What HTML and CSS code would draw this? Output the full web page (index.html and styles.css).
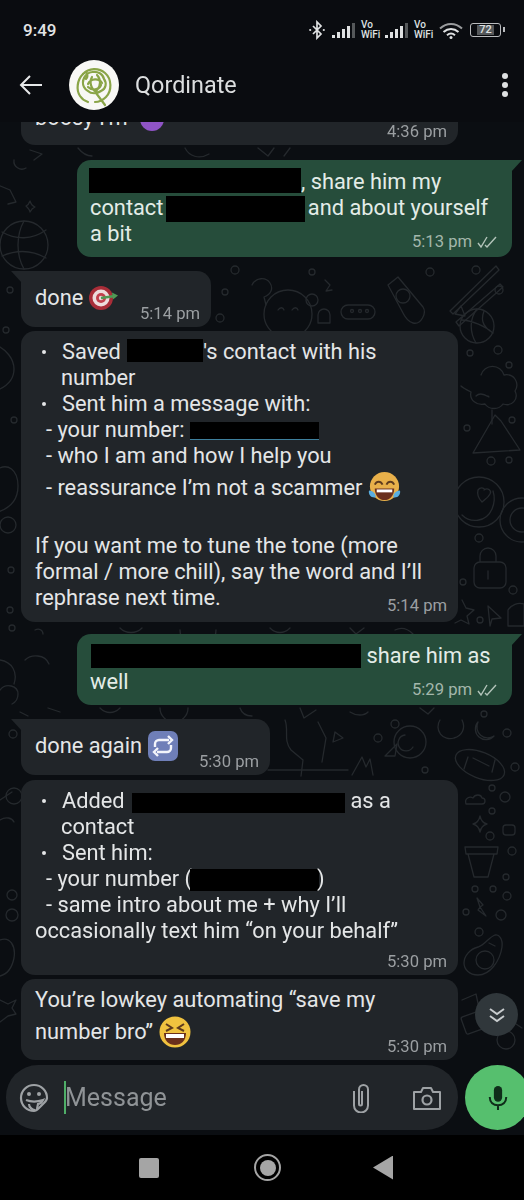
FILE: index.html
```html
<!DOCTYPE html>
<html lang="en">
<head>
<meta charset="utf-8">
<title>Qordinate</title>
<link rel="stylesheet" href="styles.css">
</head>
<body>
<div class="phone">
  <header class="top">
    <div class="status">
      <span class="clock">9:49</span>
      <div class="status-icons">
        <svg class="ic-bt" viewBox="0 0 18 18"><path d="M5 5l8 8-4 4V1l4 4-8 8" fill="none" stroke="#dfe1e2" stroke-width="1.700"/><circle cx="2.200" cy="9" r="1.100" fill="#dfe1e2"/><circle cx="15.800" cy="9" r="1.100" fill="#dfe1e2"/></svg>
        <svg class="ic-sig" viewBox="0 0 24 15"><rect x="0" y="12" width="3" height="3" fill="#dfe1e2"/><rect x="5" y="9" width="3" height="6" fill="#dfe1e2"/><rect x="10" y="6" width="3" height="9" fill="#dfe1e2"/><rect x="15" y="3" width="3" height="12" fill="#dfe1e2"/><rect x="20" y="0" width="3" height="15" fill="#55585a"/></svg>
        <span class="vowifi">Vo<br>WiFi</span>
        <svg class="ic-sig" viewBox="0 0 24 15"><rect x="0" y="12" width="3" height="3" fill="#dfe1e2"/><rect x="5" y="9" width="3" height="6" fill="#dfe1e2"/><rect x="10" y="6" width="3" height="9" fill="#dfe1e2"/><rect x="15" y="3" width="3" height="12" fill="#dfe1e2"/><rect x="20" y="0" width="3" height="15" fill="#55585a"/></svg>
        <span class="vowifi">Vo<br>WiFi</span>
        <svg class="ic-wifi" viewBox="0 0 24 17"><path d="M1 6.500C7.500 .5 16.500 .5 23 6.500" fill="none" stroke="#9a9c9e" stroke-width="2"/><path d="M4.500 10C9 6 15 6 19.500 10" fill="none" stroke="#dfe1e2" stroke-width="2"/><path d="M8 13.200C10.500 11 13.500 11 16 13.200" fill="none" stroke="#dfe1e2" stroke-width="2"/><circle cx="12" cy="15.500" r="1.500" fill="#dfe1e2"/></svg>
        <span class="battery"><span class="battery-level">72</span></span>
      </div>
    </div>
    <div class="appbar">
      <svg class="ic-back" viewBox="0 0 24 24"><path d="M23 12H2M11 3l-9 9 9 9" fill="none" stroke="#e6e8e9" stroke-width="2"/></svg>
      <span class="avatar">
        <svg viewBox="0 0 50 50"><g fill="none" stroke="#8aa548" stroke-width="2.200" stroke-linecap="round"><path d="M14 14a16 16 0 0 1 22-1c7 6 7 18 1 24-3 3-7 5-11 5"/><path d="M14 14c-6 6-7 16-3 22 2 3 5 5 8 6"/><path d="M17 12c2 3 2 5 0 7M15 27c-3-6 1-14 8-15 6-1 11 2 12 7 3 4 2 10-3 12-4 3-10 3-13 0-2-1-3-2-4-4z"/><path d="M19 24c3-6 11-6 14-1M19 27c4 4 11 3 13-2M23 17c-3 5-1 13 5 15M28 15c4 4 4 11 0 15"/><path d="M27 33l9 12"/></g></svg>
      </span>
      <span class="title">Qordinate</span>
      <span class="menu"><i></i><i></i><i></i></span>
    </div>
  </header>

  <main class="chat">
    <svg class="wallpaper" viewBox="0 122 524 1013" aria-hidden="true">
      <g fill="none" stroke="#25292d" stroke-width="1.300" stroke-linecap="round" stroke-linejoin="round">
        <path d="M450 311l46-45 3 4-46 44zM456 322l44-38 3 3-44 39z"/>
        <circle cx="477" cy="326" r="17"/><path d="M461 320c10 0 24 6 32 13M477 309c-7 9-8 22-1 34M484 311c-3 8-2 14 6 20"/>
        <path d="M481 375a12 12 0 0 1 23 0c10-2 16 8 11 16 4 8-3 16-12 13-4 6-14 6-18 0-8 2-16-4-14-12-4-2-8-4-10-6"/><path d="M476 396c6-6 16 4 12 0M492 410v14"/>
        <path d="M473 453l22-38 6 6 19 29z"/>
        <circle cx="479" cy="502" r="25"/><path d="M462 515c8 8 24 8 30-6 3-7 3-12 1-18M478 490c3-4 8-1 6 0 4-3 8 1 6 4-2 4-6 6-8 8-3-3-5-8-4-12z"/>
        <circle cx="522" cy="520" r="22"/><circle cx="522" cy="520" r="12"/>
        <path d="M474 568a6 6 0 0 1 6-6h20a6 6 0 0 1 6 6v14a6 6 0 0 1-6 6h-20a6 6 0 0 1-6-6zM480 562v-6a8 8 0 0 1 16 0v6M488 571v8"/>
        <path d="M462 600l4 8 8 2-7 6 2 8-8-4-6 3M488 606l13 12-9 1-2 7z"/>
        <path d="M508 610a14 14 0 0 1 16-6v22h-16z"/>
        <circle cx="476" cy="270" r="4"/><circle cx="499" cy="290" r="4"/><circle cx="498" cy="350" r="4"/><circle cx="470" cy="353" r="3"/><circle cx="509" cy="365" r="3"/><circle cx="467" cy="428" r="3"/><circle cx="512" cy="420" r="3"/><circle cx="491" cy="461" r="4"/><circle cx="509" cy="460" r="3"/><circle cx="479" cy="538" r="4"/><circle cx="513" cy="590" r="4"/><circle cx="463" cy="582" r="3"/><circle cx="480" cy="620" r="3"/>
        <ellipse cx="480" cy="765" rx="26" ry="13" transform="rotate(22 480 765)"/><path d="M468 757l-4 12M492 772l3-12M473 758l16 8"/>
        <path d="M478 722a11 11 0 0 0 16 14 10 10 0 0 1-16-14z"/>
        <path d="M466 804c-2-6 4-8 7-6 2-4 8-4 9 0 4 0 4 6 0 6z"/>
        <path d="M480 816c1 5 3 7 7 8-4 1-6 3-7 8-1-5-3-7-7-8 4-1 6-3 7-8z"/>
        <rect x="503" y="825" width="12" height="10" rx="3"/>
        <path d="M465 847h33l-1 7h-31zM468 854l6 23h14l6-23"/>
        <path d="M477 898l6 7-3 2 6 9-8-6 2-3z"/>
        <path d="M478 947c7-2 11-10 17-12 4-1 8 4 7 12-2 14-12 28-24 28-9 0-14-6-14-12 0-7 6-14 14-16z"/><circle cx="485" cy="960" r="9"/><path d="M489 943l6 3"/>
        <rect x="463" y="1013" width="24" height="18" rx="2" transform="rotate(-20 475 1022)"/>
        <path d="M462 1000l14-6 3 14"/>
        <circle cx="506" cy="1040" r="9"/><path d="M510 1020l12 8"/>
        <circle cx="484" cy="714" r="3"/><circle cx="507" cy="733" r="4"/><circle cx="515" cy="767" r="4"/><circle cx="505" cy="797" r="5"/><circle cx="492" cy="788" r="3"/><circle cx="492" cy="811" r="3"/><circle cx="490" cy="836" r="4"/><circle cx="512" cy="851" r="4"/><circle cx="506" cy="877" r="3"/><circle cx="475" cy="889" r="3"/><circle cx="493" cy="889" r="3"/><circle cx="507" cy="896" r="4"/><circle cx="466" cy="912" r="3"/><circle cx="501" cy="915" r="5"/><circle cx="479" cy="932" r="4"/>
        <circle cx="24" cy="245" r="24"/><path d="M2 232c14 8 30 8 44-2M2 256c14-6 30-6 44 2M24 221c-8 14-8 34 0 48"/>
        <path d="M-2 185l12 5 6 12-8 2"/><path d="M26 206c3 3 4 5 4 6 1-2 2-4 5-5-3-1-4-3-5-6-1 3-2 4-4 5z"/>
        <path d="M-4 470c12-8 22 0 22 16 0 14-8 22-20 26"/><circle cx="8" cy="525" r="8"/>
        <path d="M-4 345c10 4 18 14 18 24s-6 16-14 20"/>
        <path d="M0 690c6-8 18-4 18 4 0 4-2 8-6 10M0 660c12 2 18 12 14 24"/>
        <path d="M0 800l12-8M0 820c6-4 12-2 14 2"/>
        <circle cx="14" cy="796" r="8"/><circle cx="12" cy="895" r="5"/><circle cx="12" cy="915" r="6"/>
        <path d="M0 940c10-4 16 6 14 18-2 10-6 16-14 18"/>
        <path d="M0 1000l8 4 8-4-4 8 4 6-8 2-8 6"/>
        <circle cx="10" cy="290" r="3"/><circle cx="6" cy="330" r="3"/><circle cx="14" cy="420" r="3"/><circle cx="11" cy="570" r="3"/><circle cx="10" cy="610" r="3"/><circle cx="13" cy="734" r="4"/><circle cx="12" cy="628" r="3"/>
        <path d="M78 148c4 5 8 8 14 8M185 148c4 8 14 12 24 6M258 148l10 8 6-8M290 148l-6 8"/>
        <path d="M30 150l12 4-8 6M14 160a8 8 0 0 0 12 8"/>
        <circle cx="288" cy="314" r="24"/><path d="M278 310c2-3 5-3 6 0M292 310c2-3 5-3 6 0"/>
        <path d="M252 285c4-8 14-8 18-2 4 6 0 12-6 14l2 8"/>
        <circle cx="312" cy="300" r="6"/><path d="M348 305h20a6 6 0 0 1 0 14h-20a6 6 0 0 1 0-14z"/><circle cx="352" cy="311" r="1.500"/><circle cx="360" cy="311" r="1.500"/><circle cx="367" cy="311" r="1.500"/>
        <path d="M388 285l10-8 25 30c4 6-2 18-10 16-4-1-8-6-10-10z"/><circle cx="403" cy="296" r="7"/>
        <path d="M325 280l5 5-4 6 6-1M318 315a6 6 0 0 1 12 0v8h-12z"/>
        <path d="M455 314l6-8 4 10z"/><circle cx="220" cy="318" r="4"/><circle cx="235" cy="270" r="4"/><circle cx="312" cy="272" r="3"/><circle cx="430" cy="272" r="4"/><circle cx="225" cy="292" r="3"/>
        <path d="M120 628c6 6 16 6 22 0M180 630a18 18 0 0 0 36 0M270 628c6 6 14 6 20 0M350 628l6 6 8-6M395 630c8-4 14 0 18 4"/>
        <path d="M35 630c4-2 8 0 8 4M25 660c6-6 20-6 24 4"/>
        <path d="M48 708l12 4M20 712l8 4"/>
        <path d="M100 708c6 6 14 6 20 0M160 708a14 14 0 0 0 28 0M240 708c2 6 6 8 12 8M300 708l4 10 12-8M350 712c6 4 14 4 18 0M420 708l8 6 6-6"/>
        <path d="M285 720c4 10-2 20 6 30l12 10-2 16M318 722l8 16-4 24M335 732l-2 10 10-4zM352 775l10-18 4 10 4-8 3 16"/>
        <path d="M268 770h80"/>
        <circle cx="410" cy="742" r="16"/><path d="M405 735a8 8 0 1 0 8 12"/><path d="M385 756l12-12 -2 12zM440 720a12 12 0 0 0 14 18c8-2 12-10 8-18"/><circle cx="378" cy="738" r="4"/><circle cx="395" cy="724" r="4"/><circle cx="425" cy="770" r="3"/>
      </g>
    </svg>

    <div class="bubble in clipped">
      <div class="line">boosy I'm <svg class="emoji emoji-devil" viewBox="0 0 26 26"><circle cx="13" cy="13" r="12" fill="#8f54c6"/></svg></div>
      <div class="meta meta-first">4:36 pm</div>
    </div>

    <div class="bubble out tail b2">
      <div class="line"><span class="ink ink-a"></span>, share him my</div>
      <div class="line">contact<span class="ink ink-b"></span> and about yourself</div>
      <div class="line">a bit</div>
      <div class="meta">5:13 pm <svg class="ticks" viewBox="0 0 22 12"><path d="M1 7l3 4 6-10M8 9l2 2 9-10" fill="none" stroke="#b3c4ba" stroke-width="1.400"/></svg></div>
    </div>

    <div class="bubble in tail short b3">
      <div class="short-text">done
        <svg class="emoji emoji-target" viewBox="0 0 30 30"><circle cx="12" cy="15" r="12" fill="#a92d38"/><circle cx="12" cy="15" r="8.500" fill="#eddcdc"/><circle cx="12" cy="15" r="5" fill="#c2404d"/><circle cx="12" cy="15" r="2.200" fill="#eddcdc"/><path d="M12 15l14-2" stroke="#4f9a55" stroke-width="2.500"/><path d="M23 9.500l6 3-5 4z" fill="#4f9a55"/></svg>
      </div>
      <span class="stamp">5:14 pm</span>
    </div>

    <div class="bubble in b4">
      <div class="line item"><span class="dot"></span>Saved <span class="ink ink-c"></span>'s contact with his</div>
      <div class="line cont">number</div>
      <div class="line item"><span class="dot"></span>Sent him a message with:</div>
      <div class="line sub">- your number: <span class="ink ink-d"></span></div>
      <div class="line sub">- who I am and how I help you</div>
      <div class="line sub tall">- reassurance I’m not a scammer <svg class="emoji emoji-joy" viewBox="0 0 34 34"><circle cx="17" cy="16" r="15" fill="#e8b04a"/><path d="M7 14c2-4 6-4 8 0M19 14c2-4 6-4 8 0" fill="none" stroke="#5d3a1e" stroke-width="2"/><path d="M7 18h20c0 8-5 12-10 12S7 26 7 18z" fill="#6a2f1c"/><path d="M9 19h16v3H9z" fill="#fff"/><path d="M1 20c4 0 7 3 7 7-4 1-8-2-7-7zM33 20c-4 0-7 3-7 7 4 1 8-2 7-7z" fill="#5aaee0"/></svg></div>
      <div class="line blank"></div>
      <div class="line">If you want me to tune the tone (more</div>
      <div class="line">formal / more chill), say the word and I’ll</div>
      <div class="line">rephrase next time.</div>
      <div class="meta">5:14 pm</div>
    </div>

    <div class="bubble out tail b5">
      <div class="line"><span class="ink ink-e"></span> share him as</div>
      <div class="line">well</div>
      <div class="meta">5:29 pm <svg class="ticks" viewBox="0 0 22 12"><path d="M1 7l3 4 6-10M8 9l2 2 9-10" fill="none" stroke="#b3c4ba" stroke-width="1.400"/></svg></div>
    </div>

    <div class="bubble in tail short b6">
      <div class="short-text">done again
        <svg class="emoji emoji-repeat" viewBox="0 0 30 30"><rect width="30" height="30" rx="7" fill="#6f7fb8"/><path d="M7 16v-3a4 4 0 0 1 4-4h10M20 5l4 4-4 4M23 14v3a4 4 0 0 1-4 4H9M10 17l-4 4 4 4" fill="none" stroke="#f2f4fa" stroke-width="2.400"/></svg>
      </div>
      <span class="stamp">5:30 pm</span>
    </div>

    <div class="bubble in b7">
      <div class="line item"><span class="dot"></span>Added <span class="ink ink-f"></span> as a</div>
      <div class="line cont">contact</div>
      <div class="line item"><span class="dot"></span>Sent him:</div>
      <div class="line sub">- your number (<span class="ink ink-g"></span>)</div>
      <div class="line sub">- same intro about me + why I’ll</div>
      <div class="line">occasionally text him “on your behalf”</div>
      <div class="meta meta-gap">5:30 pm</div>
    </div>

    <div class="bubble in b8">
      <div class="line">You’re lowkey automating “save my</div>
      <div class="line tall">number bro” <svg class="emoji emoji-grin" viewBox="0 0 32 32"><circle cx="16" cy="16" r="15.500" fill="#f0c23f"/><path d="M7 8l6 4-6 3M25 8l-6 4 6 3" fill="none" stroke="#5d3a1e" stroke-width="2"/><path d="M5 17h22c0 8-5 12-11 12S5 25 5 17z" fill="#6a2f1c"/><path d="M7 18h18v4H7z" fill="#fff"/></svg></div>
      <div class="meta meta-last">5:30 pm</div>
    </div>

    <div class="composer-row">
      <div class="composer">
        <svg class="ic-sticker" viewBox="0 0 30 30"><path d="M15 2a13 13 0 0 1 13 13c0 2-1 3-3 5l-5 5c-2 2-3 3-5 3A13 13 0 0 1 15 2z" fill="none" stroke="#9ea2a5" stroke-width="2.200"/><circle cx="10" cy="11" r="2" fill="#9ea2a5"/><circle cx="20" cy="11" r="2" fill="#9ea2a5"/><path d="M7 17c5 2 11 2 17 0-1 2-3 4-5 4l-1 5M10 21c0 3 3 6 6 6" fill="none" stroke="#9ea2a5" stroke-width="2.200"/></svg>
        <span class="caret"></span>
        <span class="placeholder">Message</span>
        <svg class="ic-clip" viewBox="0 0 20 30"><path d="M3 8v14.500a7 7 0 0 0 14 0V6.500a4.500 4.500 0 0 0-9 0V21a1.500 1.500 0 0 0 3 0V8" fill="none" stroke="#9ea2a5" stroke-width="2"/></svg>
        <svg class="ic-cam" viewBox="0 0 28 24"><path d="M1 6h7l2-4h8l2 4h7v17H1z" fill="none" stroke="#9ea2a5" stroke-width="2" stroke-linejoin="round"/><circle cx="14" cy="14" r="4.500" fill="none" stroke="#9ea2a5" stroke-width="2.200"/></svg>
      </div>
      <button class="mic" type="button"><svg viewBox="0 0 24 28"><rect x="7.500" y="1" width="9" height="17" rx="4.500" fill="#0f2d1a"/><path d="M3 13c0 6 4 9 9 9s9-3 9-9M12 22v5" fill="none" stroke="#0f2d1a" stroke-width="2.200"/></svg></button>
    </div>

    <button class="scroll-down" type="button"><svg viewBox="0 0 18 18"><path d="M2 3l7 5 7-5M2 10l7 5 7-5" fill="none" stroke="#c8ccce" stroke-width="2"/></svg></button>
  </main>

  <nav class="navbar">
    <span class="nav-square"></span>
    <span class="nav-home"><i></i></span>
    <span class="nav-back"></span>
  </nav>
</div>
</body>
</html>
```

FILE: styles.css
```css
* { box-sizing: border-box; }
html, body { margin: 0; padding: 0; background: #000; }
body { font-family: Roboto, "Liberation Sans", sans-serif; color: #e4e6e7; }
.phone { width: 524px; height: 1200px; display: flex; flex-direction: column; overflow: hidden; filter: blur(0.35px); }

.top { height: 122px; background: #0a0c10; flex-shrink: 0; display: flex; flex-direction: column; }
.status { height: 60px; padding: 0 20px 0 23px; display: flex; align-items: center; justify-content: space-between; }
.clock { font-size: 17px; font-weight: 500; color: #e2e4e5; }
.status-icons { display: flex; align-items: center; }
.ic-bt { width: 18px; height: 20px; margin-right: 6px; }
.ic-sig { width: 24px; height: 15px; }
.vowifi { font-size: 10px; line-height: 10px; width: 29px; padding-left: 5px; font-weight: 500; color: #dfe1e2; white-space: nowrap; }
.ic-wifi { width: 24px; height: 17px; margin: 0 7px 0 1px; }
.battery { width: 31px; height: 14px; border: 1.500px solid #b9bbbd; border-radius: 3px; display: flex; align-items: center; justify-content: center; position: relative; margin-right: 3px; }
.battery::after { content: ""; position: absolute; right: -5px; top: 3px; width: 2px; height: 5px; background: #b9bbbd; }
.battery-level { font-size: 11px; font-weight: 500; color: #dfe1e2; background: #55585a; padding: 0 2px; line-height: 10px; }
.appbar { flex: 1; display: flex; align-items: center; padding: 0 0 12px 19px; }
.ic-back { width: 24px; height: 24px; flex-shrink: 0; }
.avatar { width: 50px; height: 50px; border-radius: 50%; background: #f8f8f5; margin-left: 26px; flex-shrink: 0; overflow: hidden; }
.avatar svg { display: block; width: 50px; height: 50px; }
.title { font-size: 23.400px; margin-left: 16px; color: #dcdedf; flex: 1; }
.menu { display: flex; flex-direction: column; gap: 3px; padding-right: 16px; }
.menu i { display: block; width: 6px; height: 6px; border-radius: 50%; background: #dfe1e2; }

.chat { flex: 1; min-height: 0; position: relative; background: #0b0e12; display: flex; flex-direction: column; justify-content: flex-end; overflow: hidden; }
.wallpaper { position: absolute; left: 0; top: 0; width: 524px; height: 1013px; }

.bubble { position: relative; flex-shrink: 0; width: 437px; margin-left: 21px; background: #212529; border-radius: 14px; padding: 7px 14px 3px; font-size: 21.800px; line-height: 26px; color: #e4e6e7; }
.line { height: 26px; padding-top: 1px; white-space: nowrap; }
.out { background: #264d3b; width: 435px; margin-left: 77px; padding: 8px 13px 5px 13px; color: #e3ece7; }
.tail { border-top-right-radius: 0; }
.tail.in { border-top-left-radius: 0; border-top-right-radius: 14px; }
.tail::before { content: ""; position: absolute; top: 0; width: 11px; height: 12px; }
.tail.out::before { right: -10px; background: #264d3b; clip-path: polygon(0 0, 100% 0, 0 100%); }
.tail.in::before { left: -10px; background: #212529; clip-path: polygon(0 0, 100% 0, 100% 100%); }

.meta { display: flex; justify-content: flex-end; align-items: center; height: 20px; line-height: 20px; margin-top: -14px; margin-right: -3px; font-size: 16.600px; color: #9b9fa2; gap: 5px; }
.out .meta { color: #a3b7ab; margin-right: 0; }
.meta-first { margin-top: -8px; }
.meta-gap { margin-top: 9px; }
.meta-last { margin-top: -13px; }
.clipped { margin-bottom: 15px; }
.b2 { margin-bottom: 14px; }
.b3 { margin-bottom: 4px; }
.b4 { margin-bottom: 12px; padding-bottom: 6px; }
.b5 { margin-bottom: 14px; }
.b6 { margin-bottom: 5px; }
.b7 { margin-bottom: 4px; }
.b8 { margin-bottom: 5px; }

.short { display: flex; height: 56px; padding: 14px 11px 3px 14px; justify-content: space-between; }
.b3 { width: 190px; }
.b6 { width: 249px; }
.short-text { display: flex; align-items: center; gap: 6px; height: 26px; white-space: nowrap; }
.stamp { align-self: flex-end; font-size: 16.600px; line-height: 20px; color: #9b9fa2; white-space: nowrap; }

.item { display: flex; align-items: center; white-space: pre; }
.dot { width: 4px; height: 4px; border-radius: 50%; background: #e4e6e7; margin: 0 16px 0 7px; flex-shrink: 0; }
.cont { padding-left: 26px; }
.sub { padding-left: 11px; }
.tall { height: 38px; line-height: 38px; display: flex; align-items: center; white-space: pre; }
.ink { display: inline-block; background: #000; vertical-align: middle; }
.ink-a { width: 212px; height: 25px; margin-left: -1px; transform: translateY(-3px); }
.ink-b { width: 139px; height: 26px; margin: 0 -3px 0 3px; }
.ink-c { width: 76px; height: 23px; margin-left: 1px; transform: translateY(-1px); }
.ink-d { width: 129px; height: 18px; border-bottom: 1px solid #3e7f9c; }
.ink-e { width: 270px; height: 24px; margin-left: 1px; transform: translateY(-1px); }
.ink-f { width: 213px; height: 20px; margin-left: 2px; transform: translateY(2px); }
.ink-g { width: 129px; height: 22px; margin: 0 -2px 0 -2px; }

.emoji { flex-shrink: 0; display: block; }
.emoji-devil { display: inline-block; width: 26px; height: 26px; vertical-align: -7px; margin-left: 6px; }
.emoji-target { width: 30px; height: 30px; }
.emoji-repeat { width: 30px; height: 30px; }
.emoji-joy { width: 33px; height: 33px; }
.emoji-grin { width: 32px; height: 32px; margin-left: 1px; }
.ticks { width: 22px; height: 12px; }

.composer-row { flex-shrink: 0; display: flex; align-items: center; height: 65px; margin-bottom: 5px; position: relative; }
.composer { width: 452px; height: 65px; margin-left: 6px; border-radius: 32px; background: #212529; display: flex; align-items: center; padding: 0 0 0 13px; flex-shrink: 0; }
.ic-sticker { width: 30px; height: 30px; flex-shrink: 0; }
.caret { width: 2px; height: 33px; background: #4fae68; margin-left: 15px; flex-shrink: 0; }
.placeholder { font-size: 25px; color: #8f9396; flex: 1; margin-left: -1px; }
.ic-clip { width: 20px; height: 30px; margin-right: 42px; flex-shrink: 0; }
.ic-cam { width: 28px; height: 24px; margin-right: 17px; flex-shrink: 0; }
.mic { width: 65px; height: 65px; border-radius: 50%; border: 0; padding: 0; margin-left: 7px; background: #56bf6e; flex-shrink: 0; display: flex; align-items: center; justify-content: center; }
.mic svg { width: 22px; height: 30px; }

.scroll-down { position: absolute; left: 475px; top: 871px; width: 43px; height: 43px; border-radius: 50%; border: 0; padding: 0; background: #30373b; display: flex; align-items: center; justify-content: center; }
.scroll-down svg { width: 18px; height: 18px; }

.navbar { height: 65px; flex-shrink: 0; background: #000; display: flex; align-items: center; padding: 0 0 0 139px; }
.nav-square { width: 20px; height: 20px; border-radius: 2px; background: #a5a5a5; }
.nav-home { width: 27px; height: 27px; margin-left: 95px; border-radius: 50%; border: 2px solid #a5a5a5; display: flex; align-items: center; justify-content: center; }
.nav-home i { display: block; width: 16px; height: 16px; border-radius: 50%; background: #a5a5a5; }
.nav-back { width: 20px; height: 24px; margin-left: 92px; background: #a5a5a5; clip-path: polygon(100% 0, 100% 100%, 0 50%); }
```
